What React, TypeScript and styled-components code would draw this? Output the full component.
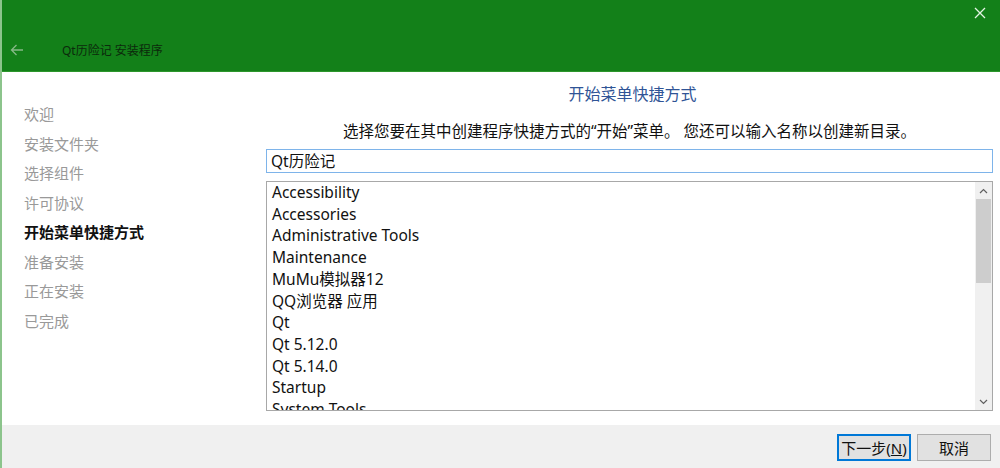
import styled, { createGlobalStyle } from 'styled-components';

const GlobalStyle = createGlobalStyle`
  html, body {
    margin: 0;
    padding: 0;
    background: #ffffff;
  }
  * {
    box-sizing: border-box;
  }
`;

const steps = [
  '欢迎',
  '安装文件夹',
  '选择组件',
  '许可协议',
  '开始菜单快捷方式',
  '准备安装',
  '正在安装',
  '已完成',
];

const folders = [
  'Accessibility',
  'Accessories',
  'Administrative Tools',
  'Maintenance',
  'MuMu模拟器12',
  'QQ浏览器 应用',
  'Qt',
  'Qt 5.12.0',
  'Qt 5.14.0',
  'Startup',
  'System Tools',
];

function App() {
  return (
    <>
      <GlobalStyle />
      <Window>
        <Header>
          <TopBar>
            <CloseButton>
              <svg width="12" height="12" viewBox="0 0 12 12">
                <path d="M1 1L11 11M11 1L1 11" stroke="#e4f4e4" strokeWidth="1.3" />
              </svg>
            </CloseButton>
          </TopBar>
          <TitleRow>
            <BackArrow>
              <svg width="14" height="12" viewBox="0 0 14 12">
                <path d="M13 6H1.5M6.5 1L1.5 6L6.5 11" stroke="#86b886" strokeWidth="1.3" fill="none" />
              </svg>
            </BackArrow>
            <WindowTitle>Qt历险记 安装程序</WindowTitle>
          </TitleRow>
        </Header>

        <Body>
          <Sidebar>
            {steps.map((s, i) => (
              <Step key={s} active={i === 4}>
                {s}
              </Step>
            ))}
          </Sidebar>

          <Content>
            <PageTitle>开始菜单快捷方式</PageTitle>
            <Description>
              选择您要在其中创建程序快捷方式的“开始”菜单。 您还可以输入名称以创建新目录。
            </Description>
            <NameInput>Qt历险记</NameInput>
            <ListBox>
              <Items>
                {folders.map((f) => (
                  <Item key={f}>{f}</Item>
                ))}
              </Items>
              <ScrollBar>
                <ScrollArrow>
                  <svg width="9" height="6" viewBox="0 0 9 6">
                    <path d="M1 5L4.5 1.5L8 5" stroke="#606060" strokeWidth="1.2" fill="none" />
                  </svg>
                </ScrollArrow>
                <Track>
                  <Thumb />
                </Track>
                <ScrollArrow>
                  <svg width="9" height="6" viewBox="0 0 9 6">
                    <path d="M1 1L4.5 4.5L8 1" stroke="#606060" strokeWidth="1.2" fill="none" />
                  </svg>
                </ScrollArrow>
              </ScrollBar>
            </ListBox>
          </Content>
        </Body>

        <Footer>
          <Button primary>
            下一步(<u>N</u>)
          </Button>
          <Button>取消</Button>
        </Footer>
      </Window>
    </>
  );
}

export default App;

const Window = styled.div`
  width: 1000px;
  height: 468px;
  display: flex;
  flex-direction: column;
  border-left: 2px solid #8cc48c;
  font-family: 'Noto Sans', 'Noto Sans CJK SC', sans-serif;
  overflow: hidden;
`;

const Header = styled.div`
  height: 72px;
  background: #138019;
  border-bottom: 1px solid #2c962c;
  display: flex;
  flex-direction: column;
`;

const TopBar = styled.div`
  height: 30px;
  display: flex;
  justify-content: flex-end;
  align-items: flex-start;
`;

const CloseButton = styled.div`
  width: 36px;
  height: 26px;
  display: flex;
  align-items: center;
  justify-content: center;
  margin-right: 2px;
`;

const TitleRow = styled.div`
  height: 40px;
  display: flex;
  align-items: center;
  padding-left: 8px;
`;

const BackArrow = styled.div`
  width: 14px;
  height: 12px;
  display: flex;
  margin-right: 38px;
`;

const WindowTitle = styled.span`
  font-size: 12px;
  color: #0c2a0c;
`;

const Body = styled.div`
  flex: 1;
  display: flex;
  background: #ffffff;
`;

const Sidebar = styled.div`
  width: 264px;
  padding: 28px 0 0 22px;
  display: flex;
  flex-direction: column;
`;

const Step = styled.div<{ active?: boolean }>`
  font-size: 15px;
  line-height: 29.5px;
  color: ${(p) => (p.active ? '#111111' : '#999999')};
  font-weight: ${(p) => (p.active ? 700 : 400)};
  white-space: nowrap;
`;

const Content = styled.div`
  flex: 1;
  padding: 10px 7px 0 0;
  display: flex;
  flex-direction: column;
`;

const PageTitle = styled.div`
  font-size: 16px;
  line-height: 24px;
  color: #2f5496;
  text-align: center;
  padding-left: 6px;
`;

const Description = styled.div`
  margin-top: 13px;
  font-size: 15.5px;
  line-height: 24px;
  color: #111111;
  text-align: center;
  white-space: nowrap;
`;

const NameInput = styled.div`
  margin-top: 6px;
  height: 24px;
  border: 1px solid #7eb4ea;
  padding-left: 4px;
  font-size: 15.5px;
  line-height: 22px;
  color: #111111;
`;

const ListBox = styled.div`
  margin-top: 8px;
  height: 230px;
  border: 1px solid #a8a8a8;
  display: flex;
  overflow: hidden;
`;

const Items = styled.div`
  flex: 1;
  padding: 0 0 0 5px;
  overflow: hidden;
`;

const Item = styled.div`
  font-size: 15.5px;
  line-height: 21.7px;
  color: #111111;
  white-space: nowrap;
`;

const ScrollBar = styled.div`
  width: 17px;
  background: #f0f0f0;
  display: flex;
  flex-direction: column;
`;

const ScrollArrow = styled.div`
  height: 17px;
  display: flex;
  align-items: center;
  justify-content: center;
`;

const Track = styled.div`
  flex: 1;
  padding: 0 1px;
`;

const Thumb = styled.div`
  height: 84px;
  background: #cdcdcd;
`;

const Footer = styled.div`
  height: 43px;
  background: #f0f0f0;
  display: flex;
  justify-content: flex-end;
  align-items: flex-start;
  gap: 6px;
  padding: 9px 9px 0 0;
`;

const Button = styled.div<{ primary?: boolean }>`
  width: 74px;
  height: 27px;
  background: #e1e1e1;
  border: ${(p) => (p.primary ? '2px solid #0078d7' : '1px solid #adadad')};
  display: flex;
  align-items: center;
  justify-content: center;
  font-size: 15px;
  color: #111111;
`;
